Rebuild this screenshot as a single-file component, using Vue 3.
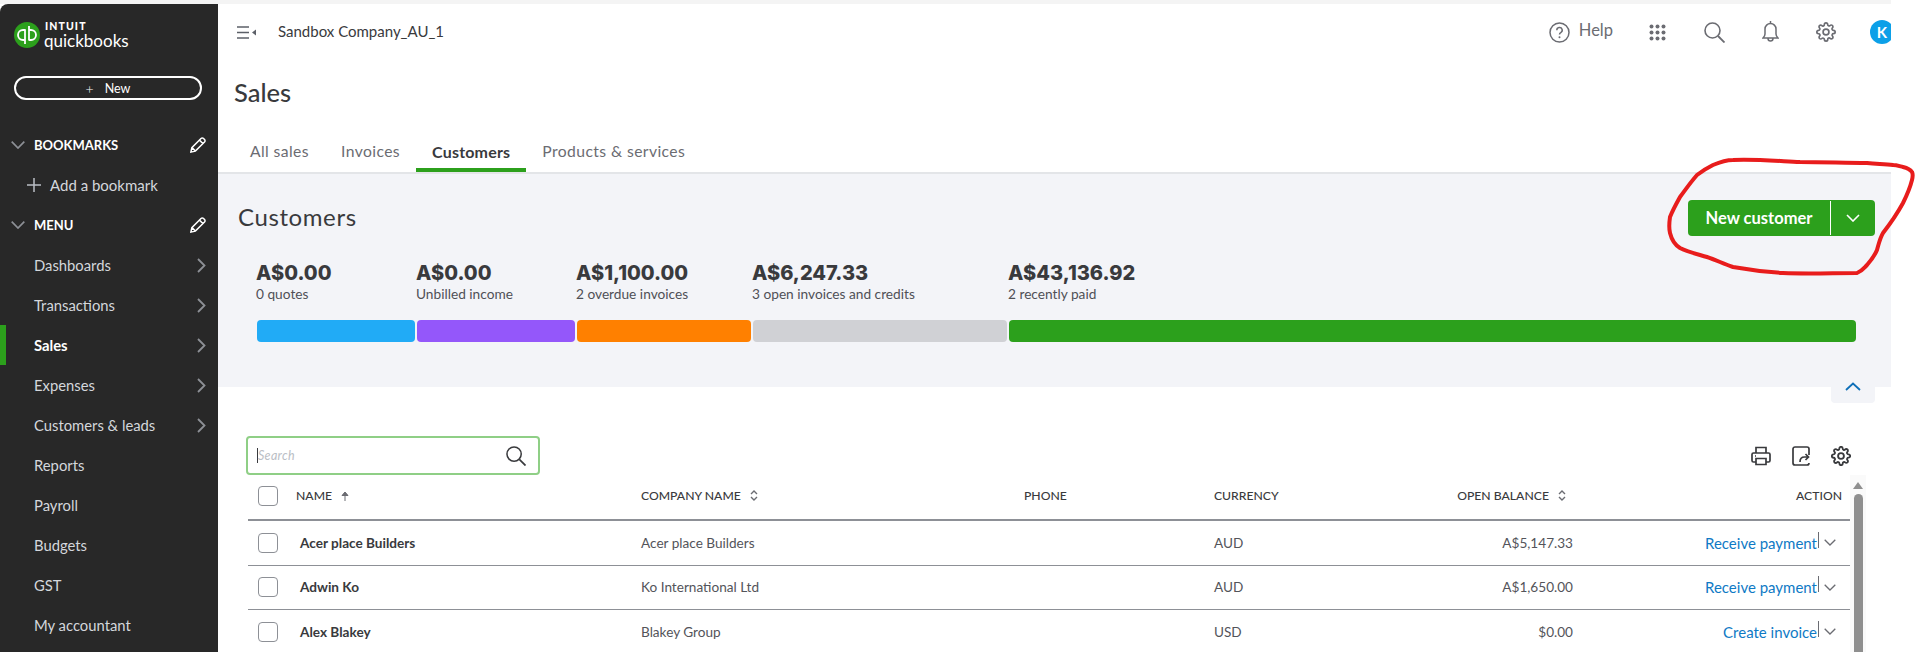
<script setup>
const gear = "M19.4 15a1.65 1.65 0 0 0 .33 1.82l.06.06a2 2 0 0 1 0 2.83 2 2 0 0 1-2.83 0l-.06-.06a1.65 1.65 0 0 0-1.82-.33 1.65 1.65 0 0 0-1 1.51V21a2 2 0 0 1-2 2 2 2 0 0 1-2-2v-.09A1.65 1.65 0 0 0 9 19.4a1.65 1.65 0 0 0-1.82.33l-.06.06a2 2 0 0 1-2.83 0 2 2 0 0 1 0-2.83l.06-.06a1.65 1.65 0 0 0 .33-1.82 1.65 1.65 0 0 0-1.51-1H3a2 2 0 0 1-2-2 2 2 0 0 1 2-2h.09A1.65 1.65 0 0 0 4.6 9a1.65 1.65 0 0 0-.33-1.82l-.06-.06a2 2 0 0 1 0-2.83 2 2 0 0 1 2.83 0l.06.06a1.65 1.65 0 0 0 1.82.33H9a1.65 1.65 0 0 0 1-1.51V3a2 2 0 0 1 2-2 2 2 0 0 1 2 2v.09a1.65 1.65 0 0 0 1 1.51 1.65 1.65 0 0 0 1.82-.33l.06-.06a2 2 0 0 1 2.83 0 2 2 0 0 1 0 2.83l-.06.06a1.65 1.65 0 0 0-.33 1.82V9a1.65 1.65 0 0 0 1.51 1H21a2 2 0 0 1 2 2 2 2 0 0 1-2 2h-.09a1.65 1.65 0 0 0-1.51 1z"
const pencil = "M2.500 21.500l1.300-6L16 3.300a2.400 2.400 0 0 1 3.400 0l1.300 1.300a2.400 2.400 0 0 1 0 3.400L8.500 20.200l-6 1.300zM14 5.500l4.500 4.500M4 15.500l4.500 4.500"
const nav = [
  { label: 'Dashboards', more: true },
  { label: 'Transactions', more: true },
  { label: 'Sales', more: true, active: true },
  { label: 'Expenses', more: true },
  { label: 'Customers & leads', more: true },
  { label: 'Reports' },
  { label: 'Payroll' },
  { label: 'Budgets' },
  { label: 'GST' },
  { label: 'My accountant' },
]
const tabs = [
  { label: 'All sales' },
  { label: 'Invoices' },
  { label: 'Customers', active: true },
  { label: 'Products & services' },
]
const stats = [
  { value: 'A$0.00', label: '0 quotes', color: '#21abf6' },
  { value: 'A$0.00', label: 'Unbilled income', color: '#9457fa' },
  { value: 'A$1,100.00', label: '2 overdue invoices', color: '#ff8000' },
  { value: 'A$6,247.33', label: '3 open invoices and credits', color: '#d0d1d5' },
  { value: 'A$43,136.92', label: '2 recently paid', color: '#2ca01c' },
]
const rows = [
  { name: 'Acer place Builders', company: 'Acer place Builders', currency: 'AUD', balance: 'A$5,147.33', action: 'Receive payment' },
  { name: 'Adwin Ko', company: 'Ko International Ltd', currency: 'AUD', balance: 'A$1,650.00', action: 'Receive payment' },
  { name: 'Alex Blakey', company: 'Blakey Group', currency: 'USD', balance: '$0.00', action: 'Create invoice' },
]
</script>

<template>
  <div class="page">
    <div class="app">
      <aside class="side">
        <div class="logo">
          <svg class="logo-mark" width="26" height="26" viewBox="0 0 26 26">
            <circle cx="13" cy="13" r="13" fill="#2ca01c" />
            <path d="M11.500 8H9a5 5 0 0 0 0 10h1.400M11 7.500V22M14.500 18H17a5 5 0 0 0 0-10h-1.400M15 4v14" fill="none" stroke="#fff" stroke-width="1.800" />
          </svg>
          <div class="logo-text">
            <span class="intuit">INTUIT</span>
            <span class="qb">quickbooks</span>
          </div>
        </div>
        <div class="new-btn"><span class="new-plus">+</span><span>New</span></div>
        <div class="sec-head">
          <svg width="14" height="8" viewBox="0 0 14 8"><path d="M.7.7 7 7l6.300-6.300" fill="none" stroke="#8d9096" stroke-width="1.700" /></svg>
          <span class="sec-title">BOOKMARKS</span>
          <svg width="18" height="18" viewBox="0 0 24 24"><path :d="pencil" fill="none" stroke="#fff" stroke-width="2" /></svg>
        </div>
        <div class="add-bm">
          <svg width="14" height="14" viewBox="0 0 14 14"><path d="M7 0v14M0 7h14" stroke="#babec5" stroke-width="1.500" /></svg>
          <span>Add a bookmark</span>
        </div>
        <div class="sec-head">
          <svg width="14" height="8" viewBox="0 0 14 8"><path d="M.7.7 7 7l6.300-6.300" fill="none" stroke="#8d9096" stroke-width="1.700" /></svg>
          <span class="sec-title">MENU</span>
          <svg width="18" height="18" viewBox="0 0 24 24"><path :d="pencil" fill="none" stroke="#fff" stroke-width="2" /></svg>
        </div>
        <nav>
          <div v-for="n in nav" :key="n.label" class="nav-item" :class="{ on: n.active }">
            <span>{{ n.label }}</span>
            <svg v-if="n.more" width="9" height="15" viewBox="0 0 9 15"><path d="M1 1l6.500 6.500L1 14" fill="none" stroke="#8d9096" stroke-width="1.800" /></svg>
          </div>
        </nav>
      </aside>

      <main class="main">
        <header class="top">
          <div class="top-left">
            <svg width="19" height="13" viewBox="0 0 19 13"><path d="M0 1h12M0 6.500h12M0 12h12" stroke="#5c6068" stroke-width="1.500" /><path d="M19 3.500v6L15 6.500z" fill="#5c6068" /></svg>
            <span class="company">Sandbox Company_AU_1</span>
          </div>
          <div class="top-right">
            <svg class="ic-help" width="21" height="21" viewBox="0 0 21 21"><circle cx="10.500" cy="10.500" r="9.500" fill="none" stroke="#6b6c72" stroke-width="1.500" /><path d="M7.800 8.200a2.700 2.700 0 1 1 4 2.400c-.9.500-1.300 1-1.300 1.900" fill="none" stroke="#6b6c72" stroke-width="1.500" /><circle cx="10.500" cy="15.200" r="1" fill="#6b6c72" /></svg>
            <span class="help">Help</span>
            <svg class="ic-grid" width="17" height="17" viewBox="0 0 17 17" fill="#6b6c72">
              <circle cx="2.500" cy="2.500" r="2" /><circle cx="8.500" cy="2.500" r="2" /><circle cx="14.500" cy="2.500" r="2" />
              <circle cx="2.500" cy="8.500" r="2" /><circle cx="8.500" cy="8.500" r="2" /><circle cx="14.500" cy="8.500" r="2" />
              <circle cx="2.500" cy="14.500" r="2" /><circle cx="8.500" cy="14.500" r="2" /><circle cx="14.500" cy="14.500" r="2" />
            </svg>
            <svg class="ic-search" width="21" height="21" viewBox="0 0 21 21"><circle cx="8.500" cy="8.500" r="7.500" fill="none" stroke="#6b6c72" stroke-width="1.600" /><path d="M14 14l6.500 6.500" stroke="#6b6c72" stroke-width="1.800" /></svg>
            <svg class="ic-bell" width="17" height="22" viewBox="0 0 17 22"><path d="M8.500 2.500a5.500 5.500 0 0 0-5.500 5.500v5c0 2-1 3-2 4h15c-1-1-2-2-2-4V8a5.500 5.500 0 0 0-5.500-5.500zM8.500 0v2.500M6 17.500a2.500 2.500 0 0 0 5 0" fill="none" stroke="#6b6c72" stroke-width="1.500" /></svg>
            <svg class="ic-gear" width="20" height="20" viewBox="0 0 24 24"><circle cx="12" cy="12" r="3.500" fill="none" stroke="#6b6c72" stroke-width="2" /><path :d="gear" fill="none" stroke="#6b6c72" stroke-width="2" /></svg>
            <span class="avatar">K</span>
          </div>
        </header>

        <h1 class="title">Sales</h1>
        <div class="tabs">
          <div v-for="t in tabs" :key="t.label" class="tab" :class="{ on: t.active }">{{ t.label }}</div>
        </div>

        <section class="panel">
          <div class="panel-head">
            <h2 class="panel-title">Customers</h2>
            <div class="cta">
              <span class="cta-label">New customer</span>
              <span class="cta-arrow">
                <svg width="14" height="8" viewBox="0 0 14 8"><path d="M1 1l6 6 6-6" fill="none" stroke="#fff" stroke-width="1.600" /></svg>
              </span>
            </div>
          </div>
          <div class="stats">
            <div v-for="(s, i) in stats" :key="i" class="stat">
              <div class="stat-value">{{ s.value }}</div>
              <div class="stat-label">{{ s.label }}</div>
              <div class="stat-bar" :style="{ background: s.color }"></div>
            </div>
          </div>
          <div class="collapse">
            <svg width="16" height="9" viewBox="0 0 16 9"><path d="M1 8l7-6.500L15 8" fill="none" stroke="#0e6fb8" stroke-width="1.800" /></svg>
          </div>
        </section>

        <section class="list">
          <div class="tools">
            <div class="search">
              <span class="caret"></span>
              <span class="ph">Search</span>
              <svg width="20" height="20" viewBox="0 0 21 21"><circle cx="8.500" cy="8.500" r="7.500" fill="none" stroke="#393a3d" stroke-width="1.600" /><path d="M14 14l6.500 6.500" stroke="#393a3d" stroke-width="1.800" /></svg>
            </div>
            <div class="tool-icons">
              <svg width="20" height="20" viewBox="0 0 20 20" fill="none" stroke="#393a3d" stroke-width="1.700"><path d="M5 7V1.500h10V7M5 16H2.500A1.500 1.500 0 0 1 1 14.500v-6A1.500 1.500 0 0 1 2.500 7h15A1.500 1.500 0 0 1 19 8.500v6a1.500 1.500 0 0 1-1.500 1.500H15" /><path d="M5 12.500h10v6H5zM4 10h1" /></svg>
              <svg width="18" height="20" viewBox="0 0 18 20" fill="none" stroke="#393a3d" stroke-width="1.700"><path d="M17 9V3a2 2 0 0 0-2-2H3a2 2 0 0 0-2 2v14a2 2 0 0 0 2 2h12a2 2 0 0 0 2-2" /><path d="M8 16c0-3 1.500-5 4.500-5H16M13.500 8l3 3-3 3" /></svg>
              <svg width="20" height="20" viewBox="0 0 24 24" fill="none" stroke="#393a3d" stroke-width="2.200"><circle cx="12" cy="12" r="3.500" /><path :d="gear" /></svg>
            </div>
          </div>

          <div class="table-wrap">
            <div class="table">
              <div class="row head">
                <span class="box"></span>
                <span class="hcell">NAME
                  <svg class="sort" width="8" height="10" viewBox="0 0 8 10"><path d="M4 10V2M1 4.500 4 1l3 3.500z" fill="#6b6c72" stroke="#6b6c72" stroke-width="1" /></svg>
                </span>
                <span class="hcell">COMPANY NAME
                  <svg class="sort" width="8" height="11" viewBox="0 0 8 11"><path d="M1 4l3-3 3 3M1 7l3 3 3-3" fill="none" stroke="#6b6c72" stroke-width="1.400" /></svg>
                </span>
                <span class="hcell">PHONE</span>
                <span class="hcell">CURRENCY</span>
                <span class="hcell right bal-h">OPEN BALANCE
                  <svg class="sort" width="8" height="11" viewBox="0 0 8 11"><path d="M1 4l3-3 3 3M1 7l3 3 3-3" fill="none" stroke="#6b6c72" stroke-width="1.400" /></svg>
                </span>
                <span class="hcell right act-h">ACTION</span>
              </div>
              <div v-for="r in rows" :key="r.name" class="row body">
                <span class="box"></span>
                <span class="name">{{ r.name }}</span>
                <span class="cell">{{ r.company }}</span>
                <span class="cell"></span>
                <span class="cell">{{ r.currency }}</span>
                <span class="cell right">{{ r.balance }}</span>
                <span class="action">
                  <span class="link">{{ r.action }}</span>
                  <span class="sep"></span>
                  <svg width="12" height="7" viewBox="0 0 12 7"><path d="M.7.7 6 6l5.300-5.300" fill="none" stroke="#6b6c72" stroke-width="1.300" /></svg>
                </span>
              </div>
            </div>
            <div class="scroll">
              <span class="scroll-up"></span>
              <span class="thumb"></span>
            </div>
          </div>
        </section>
      </main>
    </div>

    <svg class="scribble" width="1919" height="652" viewBox="0 0 1919 652">
      <path d="M1893 165C1885 164 1878 164 1867 163 1845 163 1825 162 1800 162 1778 161 1755 159 1733 160 1725 160 1720 162 1713 165 1707 168 1702 171 1697 175 1690 183 1686 189 1680 197 1675 206 1672 212 1670 217 1669 224 1669 229 1670 233 1672 241 1675 245 1680 248 1688 252 1697 254 1707 257 1716 260 1724 264 1733 267 1750 270 1766 272 1783 273 1808 274 1833 273 1857 273 1862 271 1864 268 1867 265 1873 258 1875 255 1877 250 1879 243 1880 238 1883 233 1890 224 1897 214 1903 203 1907 195 1910 188 1912 180 1913 176 1913 174 1912 172 1910 169 1907 168 1903 167 1899 166 1896 165 1893 165" fill="none" stroke="#e81c1c" stroke-width="4" stroke-linecap="round" />
    </svg>
  </div>
</template>

<style scoped>
.page {
  position: relative;
  width: 1919px;
  height: 652px;
  overflow: hidden;
  background: #fff;
  font-family: Lato, "Open Sans", sans-serif;
  color: #393a3d;
}
.app {
  display: flex;
  width: 1891px;
  height: 652px;
  border-top: 4px solid #f4f4f4;
  box-sizing: border-box;
  overflow: hidden;
}
.side {
  flex: 0 0 218px;
  height: 648px;
  box-sizing: border-box;
  background: #282828;
  border-top-left-radius: 8px;
  padding-top: 18px;
  color: #fff;
}
.logo {
  display: flex;
  align-items: center;
  gap: 4px;
  padding-left: 14px;
  height: 26px;
}
.logo-text {
  display: flex;
  flex-direction: column;
  line-height: 1;
}
.intuit {
  font-size: 10.500px;
  font-weight: 900;
  letter-spacing: 1.100px;
  margin-left: 1px;
  line-height: 11px;
}
.qb {
  font-size: 17px;
  font-weight: 400;
  line-height: 18px;
}
.new-btn {
  display: flex;
  align-items: center;
  justify-content: center;
  gap: 11px;
  margin: 28px 16px 0 14px;
  height: 24px;
  border: 2px solid #fff;
  border-radius: 12px;
  font-size: 12.500px;
  box-sizing: border-box;
}
.new-plus { font-size: 14px; font-weight: 300; }
.sec-head {
  display: flex;
  align-items: center;
  height: 40px;
  padding: 0 11px 0 11px;
}
.new-btn + .sec-head { margin-top: 25px; }
.sec-title {
  flex: 1;
  margin-left: 9px;
  font-size: 13px;
  font-weight: 700;
}
.add-bm {
  display: flex;
  align-items: center;
  gap: 9px;
  height: 40px;
  padding-left: 27px;
  font-size: 15px;
  color: #d4d7dc;
}
.nav-item {
  display: flex;
  align-items: center;
  justify-content: space-between;
  height: 40px;
  padding: 0 12px 0 34px;
  font-size: 14.800px;
  color: #d4d7dc;
  box-sizing: border-box;
}
.nav-item.on {
  padding-left: 28px;
  border-left: 6px solid #2ca01c;
  color: #fff;
  font-weight: 700;
}
.main {
  flex: 1;
  min-width: 0;
  display: flex;
  flex-direction: column;
}
.top {
  display: flex;
  align-items: center;
  justify-content: space-between;
  height: 56px;
  padding: 0 0 0 19px;
  flex: none;
}
.top-left { display: flex; align-items: center; gap: 22px; }
.company { font-size: 15px; color: #393a3d; margin-top: -2px; }
.top-right { display: flex; align-items: center; height: 100%; }
.ic-help { margin-right: 9px; }
.help { font-size: 16.500px; color: #6b6c72; margin-right: 36px; margin-top: -4px; }
.ic-grid { margin-right: 38px; }
.ic-search { margin-right: 37px; }
.ic-bell { margin-right: 37px; }
.ic-gear { margin-right: 34px; }
.avatar {
  display: flex;
  align-items: center;
  justify-content: center;
  width: 24px;
  height: 24px;
  border-radius: 50%;
  background: #0ca0e8;
  color: #fff;
  font-weight: 700;
  font-size: 15px;
  margin-right: -3px;
  flex: none;
}
.title {
  margin: 16px 0 0 16px;
  font-size: 25.500px;
  line-height: 32px;
  font-weight: 500;
  color: #393a3d;
  flex: none;
}
.tabs {
  display: flex;
  padding: 0 0 0 16px;
  border-bottom: 2px solid #e3e5e8;
  align-items: flex-end;
  flex: none;
  height: 64px;
}
.tab {
  padding: 0 16px;
  height: 30px;
  font-size: 15.700px;
  color: #6b6c72;
  letter-spacing: .4px;
  box-sizing: border-box;
}
.tab.on {
  color: #393a3d;
  font-weight: 700;
  font-size: 16px;
  letter-spacing: .2px;
  border-bottom: 4px solid #2ca01c;
}
.panel {
  position: relative;
  flex: none;
  height: 213px;
  background: #f3f4f8;
  padding: 26px 16px 0 20px;
  box-sizing: border-box;
}
.panel-head {
  display: flex;
  align-items: center;
  justify-content: space-between;
  height: 36px;
}
.panel-title {
  margin: 0 0 3px;
  font-size: 24px;
  font-weight: 400;
  letter-spacing: .6px;
}
.cta {
  display: flex;
  align-items: center;
  width: 187px;
  height: 36px;
  border-radius: 4px;
  background: #2ca01c;
  color: #fff;
  font-weight: 700;
  font-size: 16.500px;
}
.cta-label { flex: 0 0 142px; text-align: center; height: 34px; line-height: 34px; border-right: 1px solid #fff; }
.cta-arrow { flex: 1; display: flex; justify-content: center; }
.stats {
  display: grid;
  grid-template-columns: 160px 160px 176px 256px 849px;
  margin: 24px 0 0 18px;
}
.stat { min-width: 0; }
.stat-value {
  font-family: Inter, sans-serif;
  font-weight: 800;
  font-size: 20px;
  line-height: 26px;
  color: #393a3d;
  white-space: nowrap;
}
.stat-label {
  font-size: 13.700px;
  line-height: 18px;
  margin-top: -1px;
  color: #4f5056;
  white-space: nowrap;
}
.stat-bar {
  height: 22px;
  margin: 17px 1px 0 1px;
  border-radius: 4px;
}
.collapse {
  position: absolute;
  right: 16px;
  top: 205px;
  width: 44px;
  height: 24px;
  background: #f3f4f8;
  border-radius: 0 0 4px 4px;
  display: flex;
  justify-content: center;
  padding-top: 3px;
  box-sizing: border-box;
}
.list {
  padding: 49px 0 0 30px;
  flex: 1;
  min-height: 0;
  overflow: hidden;
}
.tools {
  display: flex;
  align-items: center;
  justify-content: space-between;
  padding-right: 40px;
}
.search {
  display: flex;
  align-items: center;
  width: 294px;
  height: 39px;
  box-sizing: border-box;
  margin-left: -2px;
  border: 2px solid #8fcf86;
  border-radius: 4px;
  padding: 0 12px 0 9px;
  background: #fff;
}
.caret { width: 1px; height: 15px; background: #393a3d; flex: none; }
.ph {
  flex: 1;
  font-size: 12.500px;
  font-style: italic;
  color: #babec5;
  letter-spacing: .3px;
}
.tool-icons { display: flex; align-items: center; gap: 21px; }
.table-wrap { display: flex; width: 1617px; }
.table { flex: 0 0 1602px; }
.row {
  display: grid;
  grid-template-columns: 48px 345px 383px 190px 200px 159px 277px;
  align-items: center;
  box-sizing: border-box;
}
.row.head { height: 46px; border-bottom: 2px solid #8d9096; padding-bottom: 3px; }
.row.body { height: 44.500px; border-bottom: 1px solid #8d9096; }
.box {
  width: 20px;
  height: 20px;
  margin-left: 10px;
  border: 1px solid #8d9096;
  border-radius: 4px;
  box-sizing: border-box;
  background: #fff;
}
.hcell {
  font-size: 12.200px;
  font-weight: 500;
  color: #393a3d;
  white-space: nowrap;
}
.sort { margin-left: 6px; vertical-align: -1px; }
.right { text-align: right; }
.bal-h { padding-right: 7px; }
.act-h { padding-right: 8px; }
.name {
  padding-left: 4px;
  font-size: 13.600px;
  font-weight: 700;
  color: #393a3d;
}
.cell { font-size: 13.600px; color: #53545a; }
.action {
  display: flex;
  align-items: center;
  justify-content: flex-end;
  padding-right: 14px;
}
.link { font-size: 15px; color: #0f7ac5; }
.sep { width: 1px; height: 16px; background: #6b6c72; margin: -6px 5px 0 1px; }
.scroll {
  flex: 1;
  background: #fafafa;
  padding: 7px 3px 0;
  display: flex;
  flex-direction: column;
  align-items: center;
}
.scroll-up {
  width: 0;
  height: 0;
  border-left: 5px solid transparent;
  border-right: 5px solid transparent;
  border-bottom: 7px solid #8f8f8f;
}
.thumb {
  width: 9px;
  height: 200px;
  margin-top: 5px;
  background: #8f8f8f;
  border-radius: 5px 5px 0 0;
}
.scribble {
  position: absolute;
  left: 0;
  top: 0;
  pointer-events: none;
}
</style>
